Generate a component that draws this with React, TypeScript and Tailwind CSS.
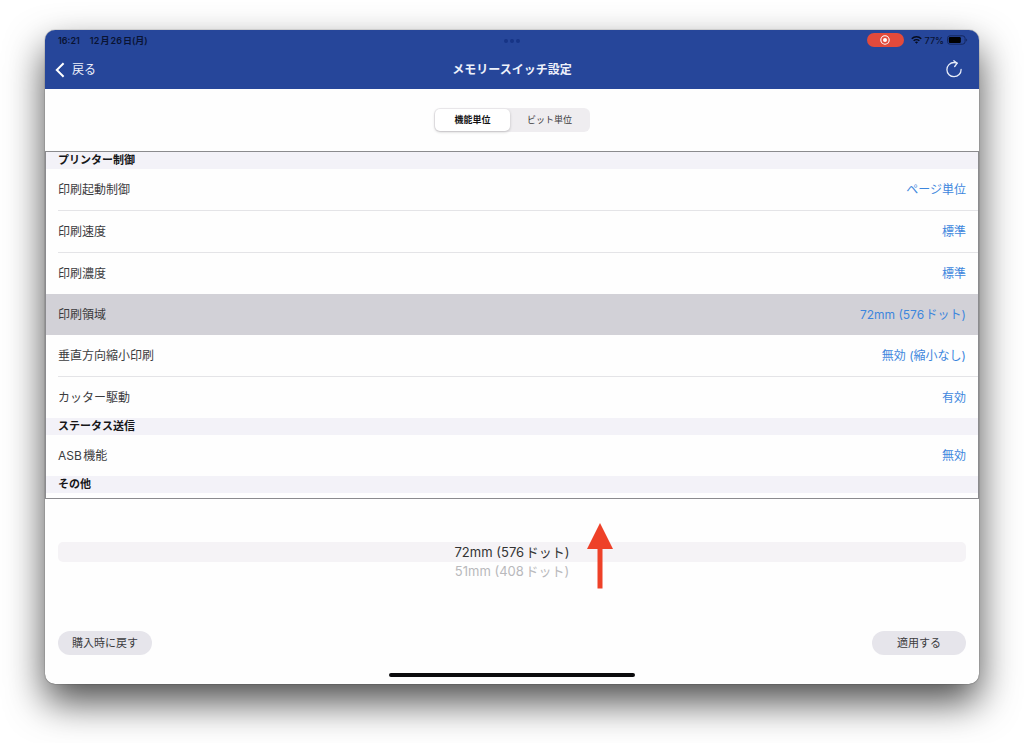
import { useState } from "react";

type Item = { label: string; value: string; divider?: boolean };
type Section = { title: string; items: Item[] };

const sections: Section[] = [
  {
    title: "プリンター制御",
    items: [
      { label: "印刷起動制御", value: "ページ単位", divider: true },
      { label: "印刷速度", value: "標準", divider: true },
      { label: "印刷濃度", value: "標準" },
      { label: "印刷領域", value: "72mm (576ドット)" },
      { label: "垂直方向縮小印刷", value: "無効 (縮小なし)", divider: true },
      { label: "カッター駆動", value: "有効" },
    ],
  },
  { title: "ステータス送信", items: [{ label: "ASB機能", value: "無効" }] },
  { title: "その他", items: [] },
];

const units = ["機能単位", "ビット単位"];
const areas = ["72mm (576ドット)", "51mm (408ドット)"];

function StatusBar() {
  return (
    <div className="relative flex h-5 items-center justify-between pl-[13px] pr-[11px] text-[9px] font-semibold leading-none text-[#0a1433]">
      <div className="flex gap-[10px]">
        <span>16:21</span>
        <span>12月26日(月)</span>
      </div>
      <div className="absolute inset-x-0 top-[9px] flex justify-center gap-[2px]">
        <i className="size-1 rounded-full bg-[#173485]" />
        <i className="size-1 rounded-full bg-[#173485]" />
        <i className="size-1 rounded-full bg-[#173485]" />
      </div>
      <div className="flex items-center">
        <span className="mr-[7px] flex h-[14px] w-[37px] items-center justify-center rounded-full bg-[#e24a3b]">
          <svg viewBox="0 0 10 10" className="size-[10px]" aria-hidden="true">
            <circle cx="5" cy="5" r="4.2" fill="none" stroke="#fff" strokeWidth="1.1" />
            <circle cx="5" cy="5" r="2" fill="#fff" />
          </svg>
        </span>
        <svg viewBox="0 0 22 16" className="mr-[3px] h-2 w-[11px]" fill="none" stroke="#060b1c" aria-hidden="true">
          <path d="M1.5 5.6a13.6 13.6 0 0 1 19 0" strokeWidth="3" />
          <path d="M5.3 9.6a8.2 8.2 0 0 1 11.4 0" strokeWidth="2.8" />
          <path d="M11 15.6 7.9 12.4a4.5 4.5 0 0 1 6.2 0z" fill="#060b1c" stroke="none" />
        </svg>
        <span className="mr-[3px] font-medium">77%</span>
        <svg viewBox="0 0 21 10" className="h-[10px] w-[21px]" aria-hidden="true">
          <rect x="0.5" y="0.8" width="17.6" height="8.4" rx="2.6" fill="none" stroke="#14275f" />
          <rect x="1.8" y="2.1" width="12" height="5.8" rx="1.2" fill="#000" />
          <path d="M19.2 3.4c1.3.5 1.3 2.7 0 3.2z" fill="#14275f" />
        </svg>
      </div>
    </div>
  );
}

function NavBar() {
  return (
    <div className="grid h-[39px] grid-cols-[1fr_auto_1fr] items-center px-[10px] text-xs text-[#eef1fa]">
      <button type="button" className="flex items-center gap-[7px] justify-self-start">
        <svg viewBox="0 0 10 16" className="h-4 w-[10px]" fill="none" stroke="#fff" strokeWidth="2" aria-hidden="true">
          <path d="M8.6 1.2 1.8 8l6.8 6.8" />
        </svg>
        戻る
      </button>
      <h1 className="font-semibold">メモリースイッチ設定</h1>
      <button type="button" aria-label="再読み込み" className="justify-self-end pr-[6px]">
        <svg viewBox="0 0 18 20" className="h-5 w-[18px]" fill="none" stroke="#e6ebf8" strokeWidth="1.3" strokeLinecap="round" aria-hidden="true">
          <path d="M12 3.1C11 2.6 9.9 2.5 9 2.5A7.1 7.1 0 1 0 16.1 9.4" />
          <path d="M8.9.7 12.2 3.2 9.7 6.5" strokeLinejoin="round" />
        </svg>
      </button>
    </div>
  );
}

export default function App() {
  const [unit, setUnit] = useState(units[0]);
  const [selected, setSelected] = useState("印刷領域");
  const [area, setArea] = useState(areas[0]);

  return (
    <div className="flex min-h-screen flex-col bg-white px-[45px] pb-[59px] pt-[30px] font-[Inter,'Noto_Sans_CJK_JP',sans-serif] text-[#3c3c3e] [text-autospace:normal]">
      <div className="flex flex-1 flex-col overflow-hidden rounded-[10px] bg-[#fefefe] shadow-[0_0_1px_rgba(0,0,0,0.9),0_18px_38px_rgba(0,0,0,0.7)]">
        <header className="bg-[#26469a]">
          <StatusBar />
          <NavBar />
        </header>

        <div className="flex justify-center py-[19px]">
          <div className="grid h-6 w-[156px] grid-cols-[75px_1fr] rounded-md bg-[#efedf0] p-px text-[9px]">
            {units.map((name) => (
              <button
                key={name}
                type="button"
                aria-pressed={unit === name}
                onClick={() => setUnit(name)}
                className={
                  unit === name
                    ? "rounded-[5px] bg-white font-bold text-[#111] shadow-[0_1px_3px_rgba(0,0,0,0.22)]"
                    : "rounded-[5px]"
                }
              >
                {name}
              </button>
            ))}
          </div>
        </div>

        <main className="border border-[#8b8b8e] pb-[5px]">
          {sections.map((section) => (
            <section key={section.title}>
              <h2 className="h-[17px] bg-[#f3f2f8] px-3 text-[11px] font-bold leading-4 text-[#161618]">
                {section.title}
              </h2>
              <ul>
                {section.items.map((item) => (
                  <li key={item.label}>
                    <button
                      type="button"
                      onClick={() => setSelected(item.label)}
                      className={
                        selected === item.label
                          ? "flex h-[41px] w-full items-center justify-between bg-[#d2d1d7] px-3 text-xs"
                          : "flex h-[41px] w-full items-center justify-between px-3 text-xs"
                      }
                    >
                      <span>{item.label}</span>
                      <span className="text-[#3d86dd]">{item.value}</span>
                    </button>
                    {item.divider && <div className="ml-3 h-px bg-[#e4e4e7]" />}
                  </li>
                ))}
              </ul>
            </section>
          ))}
        </main>

        <div className="relative px-[13px] pt-[43px]">
          <div role="listbox" aria-label="印刷領域" className="flex flex-col text-[13px]">
            {areas.map((name) => (
              <button
                key={name}
                type="button"
                role="option"
                aria-selected={area === name}
                onClick={() => setArea(name)}
                className={
                  area === name
                    ? "h-5 rounded-[5px] bg-[#f5f3f6] leading-5 text-[#333]"
                    : "h-[18px] leading-[18px] text-[#b9b9bc]"
                }
              >
                {name}
              </button>
            ))}
          </div>
          <svg viewBox="0 0 26 66" className="absolute left-1/2 top-6 ml-[75px] h-[66px] w-[26px]" fill="#ee4128" aria-hidden="true">
            <path d="M13 0 26 26H15.5V65.5H10.5V26H0z" />
          </svg>
        </div>

        <footer className="mt-auto">
          <div className="flex justify-between px-[13px] text-[11px]">
            <button type="button" className="h-6 w-[94px] rounded-full bg-[#e6e5eb]">購入時に戻す</button>
            <button type="button" className="h-6 w-[94px] rounded-full bg-[#e6e5eb]">適用する</button>
          </div>
          <div className="mx-auto mb-[7px] mt-[18px] h-1 w-[246px] rounded-full bg-[#0b0b0d]" />
        </footer>
      </div>
    </div>
  );
}
